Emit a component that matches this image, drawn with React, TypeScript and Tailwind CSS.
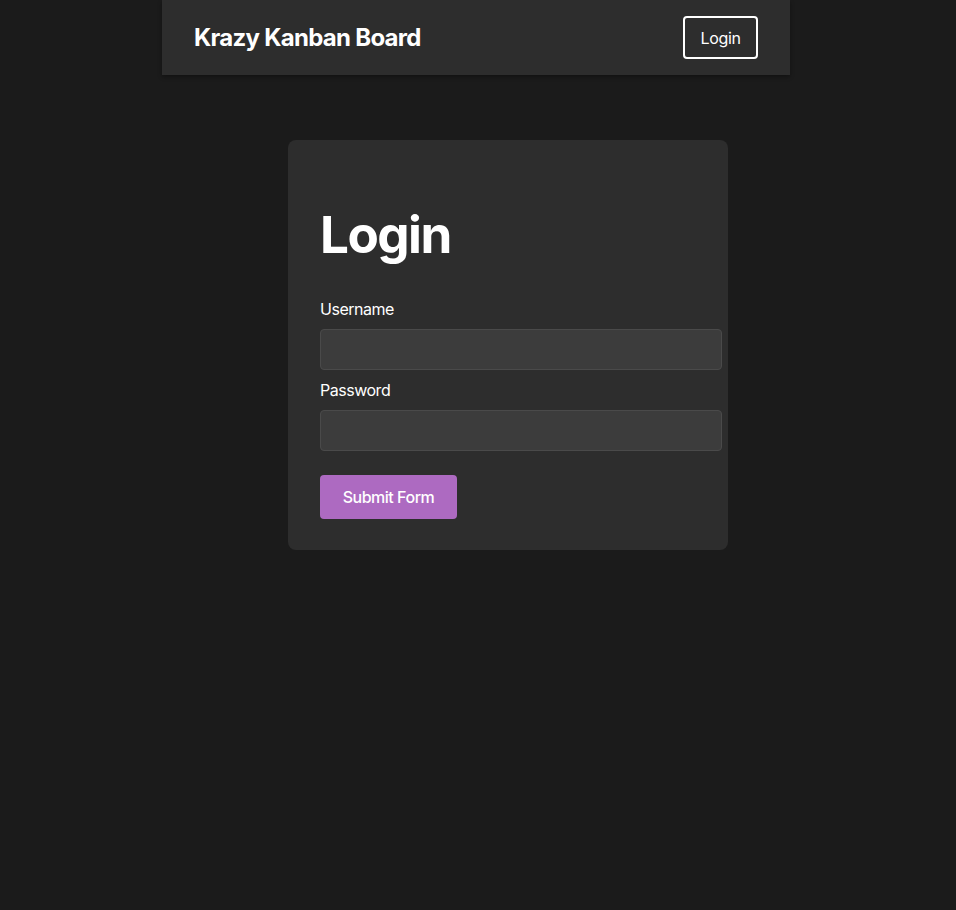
const App = () => {
    return (
        <div className="min-h-screen w-full bg-[#1b1b1b] text-white" style={{ fontFamily: 'Inter, "Noto Sans", sans-serif' }}>
            <div className="ml-[162px] w-[628px]">
                {/* Header */}
                <header className="flex h-[75px] items-center justify-between bg-[#2d2d2d] px-8 shadow-[0_2px_4px_rgba(0,0,0,0.35)]">
                    <h2 className="text-2xl font-bold tracking-[-0.03em]">Krazy Kanban Board</h2>
                    <button className="h-[43px] w-[75px] rounded-[4px] border-2 border-white text-base font-normal tracking-[-0.02em] text-white">
                        Login
                    </button>
                </header>

                {/* Login Card */}
                <main className="pt-[65px] pl-[126px]">
                    <div className="w-[440px] rounded-lg bg-[#2d2d2d] px-8 pt-8 pb-[31px]">
                        <h1 className="my-[34px] text-[51.2px] leading-[1.1] font-bold tracking-[-0.03em]">Login</h1>
                        <form className="flex flex-col">
                            <label className="mt-px mb-2 text-base leading-6 font-normal tracking-[-0.03em]">Username</label>
                            <input
                                type="text"
                                className="h-[41px] w-[402px] rounded-[4px] border border-[#4a4a4a] bg-[#3c3c3c] px-3 text-white outline-none"
                            />
                            <label className="mt-2 mb-2 text-base leading-6 font-normal tracking-[-0.03em]">Password</label>
                            <input
                                type="password"
                                className="h-[41px] w-[402px] rounded-[4px] border border-[#4a4a4a] bg-[#3c3c3c] px-3 text-white outline-none"
                            />
                            <div className="mt-6">
                                <button
                                    type="button"
                                    className="h-[44px] w-[137px] rounded-[4px] bg-[#ad6ac1] text-base font-medium tracking-[-0.03em] text-white"
                                >
                                    Submit Form
                                </button>
                            </div>
                        </form>
                    </div>
                </main>
            </div>
        </div>
    );
};

export default App;
